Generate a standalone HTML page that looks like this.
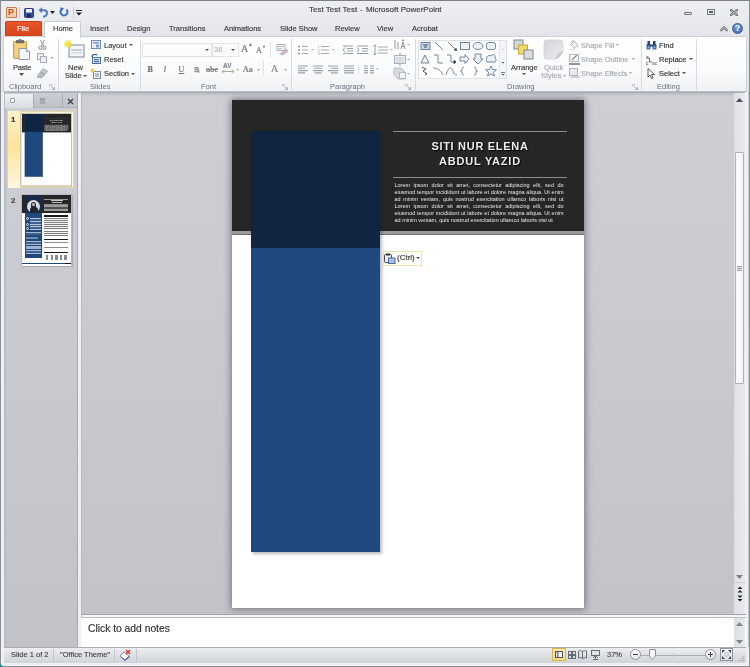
<!DOCTYPE html>
<html><head><meta charset="utf-8">
<style>
*{margin:0;padding:0;box-sizing:border-box}
html,body{width:750px;height:667px;overflow:hidden;background:#e3e6ea;font-family:"Liberation Sans",sans-serif;color:#333}
.a{position:absolute}
.t{position:absolute;white-space:nowrap;font-size:7.5px;line-height:9px;color:#3b3b3b;-webkit-text-stroke:0.15px currentColor}
.g{position:absolute;white-space:nowrap;font-size:7.5px;line-height:9px;color:#6a7380}
.sep{position:absolute;width:1px;background:#d6dbe1}
</style></head><body><div id="root" style="position:absolute;left:0;top:0;width:750px;height:667px;overflow:hidden;will-change:transform">
<!-- window frame -->
<div class="a" style="left:0;top:0;width:750px;height:667px;background:linear-gradient(#eceef0,#e9ebee 18px,#e2e4e7 36px,#e2e4e7);"></div>
<div class="a" style="left:0;top:0;width:750px;height:1px;background:#7a7f86"></div>
<div class="a" style="left:0;top:0;width:1px;height:667px;background:#8a8d94"></div>
<div class="a" style="left:749px;top:0;width:1px;height:667px;background:#8a8d94"></div>

<!-- title -->
<div class="t" style="left:309px;top:5px;font-size:8px;color:#3c3c3c">Test Test Test</div><div class="t" style="left:360px;top:5px;font-size:8px;color:#3c3c3c">-</div><div class="t" style="left:366px;top:5px;font-size:8px;color:#3c3c3c">Microsoft PowerPoint</div>


<!-- QAT -->
<div class="a" style="left:6px;top:7px;width:11px;height:11px;background:linear-gradient(#fbe3cf,#f6c9a6);border:1px solid #c9794a;border-radius:1px"></div>
<div class="t" style="left:8px;top:7px;font-size:9px;line-height:11px;font-weight:bold;color:#d0531b">P</div>
<div class="a" style="left:19px;top:7px;width:1px;height:11px;background:#c7ccd3"></div>
<svg class="a" style="left:24px;top:8px" width="10" height="10" viewBox="0 0 10 10"><rect x="0.5" y="0.5" width="9" height="9" rx="1" fill="#3a4fa0" stroke="#2b3a7c"/><rect x="2" y="1" width="6" height="3.5" fill="#e8ecf5"/><rect x="3" y="6" width="4" height="3" fill="#1d2a5c"/></svg>
<svg class="a" style="left:38px;top:7px" width="10" height="11" viewBox="0 0 10 11"><path d="M3 3.2 H6 C8.2 3.2,9 4.6,9 6 C9 8,7.5 9.5,5 9.8" fill="none" stroke="#4a78c4" stroke-width="1.9"/><path d="M0.5 3.2 L4 0.2 V6.2z" fill="#4a78c4"/></svg>
<svg class="a" style="left:50px;top:11px" width="5" height="3" viewBox="0 0 5 3"><path d="M0 0 H5 L2.5 3z" fill="#222"/></svg>
<svg class="a" style="left:59px;top:7px" width="10" height="10" viewBox="0 0 10 10"><path d="M7.5 2.5 A3.5 3.5 0 1 1 3 2" fill="none" stroke="#3d6fc2" stroke-width="2"/><path d="M1 0.5 L5 1 L2.5 4.5z" fill="#3d6fc2"/></svg>
<div class="a" style="left:73px;top:7px;width:1px;height:11px;background:#c7ccd3"></div>
<svg class="a" style="left:76px;top:10px" width="6" height="6" viewBox="0 0 6 6"><rect x="0" y="0" width="6" height="1" fill="#222"/><path d="M0 2.5 H6 L3 5.5z" fill="#222"/></svg>

<!-- window controls -->
<div class="a" style="left:684px;top:11.5px;width:8px;height:3.5px;border:1px solid #6f7580;border-radius:1px;background:#f3f4f6"></div>
<div class="a" style="left:707px;top:9px;width:7.5px;height:6px;border:1px solid #6f7580;background:#f3f4f6"></div>
<div class="a" style="left:709px;top:11px;width:3.5px;height:2px;background:#4f5560"></div>
<svg class="a" style="left:729.5px;top:8.5px" width="8" height="7" viewBox="0 0 8 7"><path d="M1 1 L7 6 M7 1 L1 6" stroke="#6a707a" stroke-width="2.4" stroke-linecap="square"/><path d="M1 1 L7 6 M7 1 L1 6" stroke="#e6e8eb" stroke-width="0.7"/></svg>
<svg class="a" style="left:720px;top:25px" width="8" height="7" viewBox="0 0 8 7"><path d="M1.2 5.2 L4 2.4 L6.8 5.2" fill="none" stroke="#6b7079" stroke-width="2.3" stroke-linejoin="round" stroke-linecap="round"/><path d="M1.2 5.2 L4 2.4 L6.8 5.2" fill="none" stroke="#e9ecef" stroke-width="0.8" stroke-linejoin="round" stroke-linecap="round"/></svg>
<div class="a" style="left:732px;top:22.5px;width:11px;height:11px;border-radius:50%;background:radial-gradient(circle at 40% 35%,#6f9bd6,#3b66a8);border:1px solid #3a5f98"></div>
<div class="t" style="left:735px;top:23px;font-size:9px;line-height:11px;font-weight:bold;color:#eef3fa">?</div>

<!-- tabs -->
<div class="a" style="left:5px;top:21px;width:37px;height:15px;background:linear-gradient(#e8562a,#d8431b);border:1px solid #c0401f;border-bottom:none;border-radius:2px 2px 0 0"></div>
<div class="t" style="left:17px;top:24px;color:#fff">File</div>
<div class="a" style="left:44px;top:21px;width:37px;height:17px;background:linear-gradient(#ffffff,#fbfcfd);border:1px solid #c9ced5;border-bottom:none;border-radius:2px 2px 0 0;z-index:3"></div>
<div class="t" style="left:53px;top:24px;z-index:4">Home</div>
<div class="t" style="left:90px;top:24px">Insert</div>
<div class="t" style="left:127px;top:24px">Design</div>
<div class="t" style="left:169px;top:24px">Transitions</div>
<div class="t" style="left:224px;top:24px">Animations</div>
<div class="t" style="left:280px;top:24px">Slide Show</div>
<div class="t" style="left:335px;top:24px">Review</div>
<div class="t" style="left:377px;top:24px">View</div>
<div class="t" style="left:412px;top:24px">Acrobat</div>

<!-- ribbon body -->
<div class="a" style="left:3px;top:36px;width:744px;height:56px;background:linear-gradient(#ffffff,#fafbfc 60%,#eff1f4);border:1px solid #cdd2d8;border-bottom-color:#b9bfc7;z-index:2"></div>


<div id="ribbon" class="a" style="left:0;top:0;width:750px;height:92px;z-index:5">
<!-- separators -->
<div class="sep" style="left:58px;top:39px;height:51px"></div>
<div class="sep" style="left:140px;top:39px;height:51px"></div>
<div class="sep" style="left:291px;top:39px;height:51px"></div>
<div class="sep" style="left:415px;top:39px;height:51px"></div>
<div class="sep" style="left:641px;top:39px;height:51px"></div>
<div class="sep" style="left:696px;top:39px;height:51px"></div>

<!-- group labels -->
<div class="g" style="left:9px;top:82px">Clipboard</div>
<div class="g" style="left:90px;top:82px">Slides</div>
<div class="g" style="left:201px;top:82px">Font</div>
<div class="g" style="left:330px;top:82px">Paragraph</div>
<div class="g" style="left:507px;top:82px">Drawing</div>
<div class="g" style="left:657px;top:82px">Editing</div>
<!-- launchers -->
<svg class="a" style="left:49px;top:84px" width="6" height="6" viewBox="0 0 6 6"><path d="M0.5 0.5 H3 M0.5 0.5 V3" stroke="#c3c9d0" stroke-width="1" fill="none"/><path d="M2 2 L5.5 5.5 M5.5 3 V5.5 H3" stroke="#aab2bb" stroke-width="1" fill="none"/></svg>
<svg class="a" style="left:282px;top:84px" width="6" height="6" viewBox="0 0 6 6"><path d="M0.5 0.5 H3 M0.5 0.5 V3" stroke="#c3c9d0" stroke-width="1" fill="none"/><path d="M2 2 L5.5 5.5 M5.5 3 V5.5 H3" stroke="#aab2bb" stroke-width="1" fill="none"/></svg>
<svg class="a" style="left:405px;top:84px" width="6" height="6" viewBox="0 0 6 6"><path d="M0.5 0.5 H3 M0.5 0.5 V3" stroke="#c3c9d0" stroke-width="1" fill="none"/><path d="M2 2 L5.5 5.5 M5.5 3 V5.5 H3" stroke="#aab2bb" stroke-width="1" fill="none"/></svg>
<svg class="a" style="left:632px;top:84px" width="6" height="6" viewBox="0 0 6 6"><path d="M0.5 0.5 H3 M0.5 0.5 V3" stroke="#c3c9d0" stroke-width="1" fill="none"/><path d="M2 2 L5.5 5.5 M5.5 3 V5.5 H3" stroke="#aab2bb" stroke-width="1" fill="none"/></svg>

<!-- Clipboard -->
<svg class="a" style="left:13px;top:39px" width="18" height="22" viewBox="0 0 18 22"><rect x="0.5" y="2.5" width="13" height="17" rx="0.8" fill="#ecc462" stroke="#c9a04c"/><rect x="1.8" y="4" width="10.5" height="14" fill="#f2d27e"/><rect x="3" y="1" width="8" height="3.2" rx="0.6" fill="#6d6a66"/><rect x="5.5" y="0" width="3" height="1.6" fill="#8d8a86"/><path d="M6 9.5 H13.5 L16.5 12.5 V20.5 H6z" fill="#f5f6fb" stroke="#8e8aa6" stroke-width="0.9"/><path d="M13.5 9.5 V12.5 H16.5" fill="#dcdbe8" stroke="#8e8aa6" stroke-width="0.7"/></svg>
<div class="t" style="left:13px;top:62.5px;letter-spacing:-0.2px">Paste</div>
<svg class="a" style="left:19px;top:73px" width="5" height="3" viewBox="0 0 5 3"><path d="M0 0 H5 L2.5 3z" fill="#555"/></svg>
<svg class="a" style="left:38px;top:40px" width="9" height="10" viewBox="0 0 9 10"><path d="M2.5 0 L5.5 6 M6.5 0 L3.5 6" stroke="#9aa0a8" stroke-width="1.1"/><circle cx="2.5" cy="7.8" r="1.6" fill="none" stroke="#9aa0a8" stroke-width="1.1"/><circle cx="6.5" cy="7.8" r="1.6" fill="none" stroke="#9aa0a8" stroke-width="1.1"/></svg>
<svg class="a" style="left:37px;top:53px" width="11" height="10" viewBox="0 0 11 10"><rect x="0.5" y="0.5" width="6" height="6" fill="#eceef1" stroke="#a7adb5"/><rect x="3.5" y="3.5" width="6" height="6" fill="#eceef1" stroke="#a7adb5"/></svg>
<svg class="a" style="left:50px;top:57px" width="4" height="2" viewBox="0 0 4 2"><path d="M0 0 H4 L2 2z" fill="#a7adb5"/></svg>
<svg class="a" style="left:37px;top:68px" width="11" height="10" viewBox="0 0 11 10"><path d="M6 0.5 L10.5 3 L8 6.5 L3.5 4z" fill="#c4c8ce" stroke="#a3a9b1" stroke-width="0.8"/><path d="M3.5 4 L8 6.5 L5 9.5 L0.5 9.5 L1 7z" fill="#b5bac1" stroke="#9ca2aa" stroke-width="0.8"/></svg>

<!-- Slides -->
<svg class="a" style="left:64px;top:40px" width="22" height="19" viewBox="0 0 22 19"><rect x="5" y="5" width="15" height="12" fill="#f3f5f8" stroke="#7f8a98"/><rect x="7" y="9" width="11" height="2" fill="#c5cdd8"/><rect x="7" y="12" width="11" height="1.5" fill="#d5dbe3"/><path d="M4 0 V8 M0 4 H8 M1 1 L7 7 M7 1 L1 7" stroke="#f2e23a" stroke-width="1.3"/></svg>
<div class="t" style="left:68px;top:63px">New</div>
<div class="t" style="left:65px;top:71px">Slide</div>
<svg class="a" style="left:83px;top:75px" width="4" height="2" viewBox="0 0 4 2"><path d="M0 0 H4 L2 2z" fill="#555"/></svg>
<svg class="a" style="left:91px;top:40px" width="10" height="9" viewBox="0 0 10 9"><rect x="0.5" y="0.5" width="9" height="8" fill="#e6edf6" stroke="#6f8db5"/><rect x="2" y="2" width="6" height="1.5" fill="#7f9cc2"/><rect x="5" y="4.5" width="3" height="3" fill="#7f9cc2"/></svg>
<div class="t" style="left:104px;top:40.5px">Layout</div>
<svg class="a" style="left:129px;top:44px" width="4" height="2" viewBox="0 0 4 2"><path d="M0 0 H4 L2 2z" fill="#555"/></svg>
<svg class="a" style="left:91px;top:54px" width="10" height="10" viewBox="0 0 10 10"><rect x="1.5" y="3.5" width="8" height="6" fill="#dfe7f2" stroke="#4d6f9f"/><path d="M1 3 A3 3 0 0 1 6 1" fill="none" stroke="#2f5fa8" stroke-width="1.4"/><rect x="3" y="5" width="5" height="1.2" fill="#4d6f9f"/><rect x="3" y="7" width="5" height="1.2" fill="#4d6f9f"/></svg>
<div class="t" style="left:104px;top:55px">Reset</div>
<svg class="a" style="left:90px;top:68px" width="11" height="11" viewBox="0 0 11 11"><rect x="3.5" y="3.5" width="7" height="7" fill="#f0f3f7" stroke="#7f8a98"/><rect x="5" y="5.5" width="4" height="1" fill="#7f8a98"/><rect x="5" y="7.5" width="4" height="1" fill="#7f8a98"/><circle cx="2.5" cy="2.5" r="2" fill="#f0d04a"/></svg>
<div class="t" style="left:104px;top:69px">Section</div>
<svg class="a" style="left:131px;top:73px" width="4" height="2" viewBox="0 0 4 2"><path d="M0 0 H4 L2 2z" fill="#555"/></svg>

<!-- Font -->
<div class="a" style="left:142px;top:43px;width:70px;height:14px;background:#fbfbfc;border:1px solid #e1e4e8"></div>
<div class="a" style="left:212px;top:43px;width:27px;height:14px;background:#fbfbfc;border:1px solid #e1e4e8"></div>
<svg class="a" style="left:205px;top:49px" width="4" height="2" viewBox="0 0 4 2"><path d="M0 0 H4 L2 2z" fill="#555"/></svg>
<div class="t" style="left:214px;top:45px;color:#b5b9be">36</div>
<svg class="a" style="left:231px;top:49px" width="4" height="2" viewBox="0 0 4 2"><path d="M0 0 H4 L2 2z" fill="#555"/></svg>
<div class="t" style="left:241px;top:43px;font-size:10px;line-height:12px;color:#777;font-family:'Liberation Serif',serif">A</div>
<div class="t" style="left:248px;top:42px;font-size:5px;line-height:5px;color:#777">&#9650;</div>
<div class="t" style="left:256px;top:46px;font-size:8px;line-height:10px;color:#777;font-family:'Liberation Serif',serif">A</div>
<div class="t" style="left:262px;top:44px;font-size:4px;line-height:5px;color:#777">&#9660;</div>
<div class="sep" style="left:270px;top:42px;height:15px;background:#dde1e6"></div>
<svg class="a" style="left:275px;top:44px" width="14" height="12" viewBox="0 0 14 12"><rect x="2" y="0.5" width="8" height="6" fill="#f2f4f7" stroke="#a9b0b9"/><path d="M3 2.5 H9 M3 4.5 H7" stroke="#c0c6ce"/><path d="M5 10 L11 5 L13 7 L8 11z" fill="#d7b4c7" stroke="#a7a0a8" stroke-width="0.6"/></svg>
<div class="t" style="left:147.5px;top:64.5px;font-size:8px;line-height:10px;font-weight:bold;color:#666;font-family:'Liberation Serif',serif">B</div>
<div class="t" style="left:163.5px;top:64.5px;font-size:8px;line-height:10px;font-style:italic;color:#777;font-family:'Liberation Serif',serif">I</div>
<div class="t" style="left:178.5px;top:64.5px;font-size:8px;line-height:10px;text-decoration:underline;color:#777;font-family:'Liberation Serif',serif">U</div>
<div class="t" style="left:194px;top:64.5px;font-size:8px;line-height:10px;font-weight:bold;color:#888;text-shadow:1px 1px 0 #ccc">S</div>
<div class="t" style="left:206px;top:64.5px;font-size:8px;line-height:10px;font-weight:bold;color:#888;text-decoration:line-through;font-family:'Liberation Serif',serif">abc</div>
<div class="t" style="left:223px;top:61.5px;font-size:6.5px;line-height:7px;font-weight:bold;color:#888">AV</div>
<svg class="a" style="left:222px;top:68.5px" width="12" height="5" viewBox="0 0 12 5"><path d="M0 2.5 H12 M0 2.5 L2 0.5 M0 2.5 L2 4.5 M12 2.5 L10 0.5 M12 2.5 L10 4.5" stroke="#8cb08c" stroke-width="0.9" fill="none"/></svg>
<svg class="a" style="left:236px;top:68.5px" width="3" height="2" viewBox="0 0 3 2"><path d="M0 0 H3 L1.5 2z" fill="#aaa"/></svg>
<div class="t" style="left:243px;top:64.5px;font-size:8px;line-height:10px;font-weight:bold;color:#888;font-family:'Liberation Serif',serif">Aa</div>
<svg class="a" style="left:257px;top:68.5px" width="3" height="2" viewBox="0 0 3 2"><path d="M0 0 H3 L1.5 2z" fill="#aaa"/></svg>
<div class="sep" style="left:263px;top:61px;height:14px;background:#dde1e6"></div>
<div class="t" style="left:271px;top:62.5px;font-size:10px;line-height:12px;color:#888;font-family:'Liberation Serif',serif">A</div>
<svg class="a" style="left:284px;top:68.5px" width="3" height="2" viewBox="0 0 3 2"><path d="M0 0 H3 L1.5 2z" fill="#aaa"/></svg>

<!-- Paragraph -->
<svg class="a" style="left:297px;top:45px" width="100" height="10" viewBox="0 0 100 10">
 <g fill="#8f959d"><circle cx="2" cy="1.5" r="1"/><circle cx="2" cy="5" r="1"/><circle cx="2" cy="8.5" r="1"/></g>
 <g stroke="#a3a9b1" stroke-width="1"><path d="M5 1.5 H11 M5 5 H11 M5 8.5 H11"/></g>
 <path d="M14 4 H17 L15.5 5.5z" fill="#a3a9b1"/>
 <g fill="#8f959d" font-size="3" font-family="Liberation Sans"><text x="21" y="3">1</text><text x="21" y="6.5">2</text><text x="21" y="10">3</text></g>
 <g stroke="#a3a9b1" stroke-width="1"><path d="M24 1.5 H32 M24 5 H32 M24 8.5 H32"/></g>
 <path d="M35 4 H38 L36.5 5.5z" fill="#a3a9b1"/>
 <g stroke="#9aa0a8" stroke-width="1"><path d="M46 1 H56 M50 3.5 H56 M50 6 H56 M46 8.5 H56"/></g>
 <path d="M48 2.5 L46 4.75 L48 7" fill="none" stroke="#8f959d" stroke-width="1"/>
 <g stroke="#9aa0a8" stroke-width="1"><path d="M60 1 H71 M65 3.5 H71 M65 6 H71 M60 8.5 H71"/></g>
 <path d="M60 2.5 L62 4.75 L60 7" fill="none" stroke="#8f959d" stroke-width="1"/>
 <g stroke="#a3a9b1" stroke-width="1"><path d="M81 2 H91 M81 5 H91 M81 8 H91"/></g>
 <path d="M78 0 V10 M76.5 1.5 L78 0 L79.5 1.5 M76.5 8.5 L78 10 L79.5 8.5" fill="none" stroke="#8f959d" stroke-width="0.9"/>
 <path d="M93 4 H96 L94.5 5.5z" fill="#a3a9b1"/>
</svg>
<svg class="a" style="left:297px;top:64.5px" width="84" height="9" viewBox="0 0 84 9">
 <g stroke="#9ca2aa" stroke-width="1.1">
 <path d="M1 1 H11 M1 3.3 H8 M1 5.6 H11 M1 7.9 H8"/>
 <path d="M16 1 H26 M17.5 3.3 H24.5 M16 5.6 H26 M17.5 7.9 H24.5"/>
 <path d="M31 1 H41 M34 3.3 H41 M31 5.6 H41 M34 7.9 H41"/>
 <path d="M47 1 H57 M47 3.3 H57 M47 5.6 H57 M47 7.9 H57"/>
 </g>
 <path d="M61.5 0 V9" stroke="#dde1e6"/>
 <g stroke="#9ca2aa" stroke-width="1.1"><path d="M67 1 H71 M67 3.3 H71 M67 5.6 H71 M67 7.9 H71 M73 1 H77 M73 3.3 H77 M73 5.6 H77 M73 7.9 H77"/></g>
 <path d="M79 3.5 H82 L80.5 5z" fill="#a3a9b1"/>
</svg>
<svg class="a" style="left:393px;top:39px" width="18" height="41" viewBox="0 0 18 41">
 <g stroke="#8f959d" stroke-width="1"><path d="M2 1 V10 M5 3 V10"/></g>
 <path d="M8 10 L10 3 L12 10 M9 7.5 H11" fill="none" stroke="#8f959d" stroke-width="1"/>
 <path d="M10 0 L8.5 2 H11.5z" fill="#8f959d"/>
 <path d="M14 5 H17 L15.5 6.5z" fill="#a3a9b1"/>
 <rect x="1.5" y="16.5" width="11" height="8" fill="#eef1f4" stroke="#a9b0b9"/>
 <path d="M3 19 H11 M3 21 H11 M3 23 H11" stroke="#c3c9d0"/>
 <path d="M7 14 V16 M7 25 V27" stroke="#8f959d"/>
 <path d="M14 20 H17 L15.5 21.5z" fill="#a3a9b1"/>
 <path d="M1 29 H8 L12 33 V40 H5 L1 36z" fill="#d6dbe1" stroke="#a9b0b9" stroke-width="0.8"/>
 <rect x="6.5" y="33.5" width="6" height="6" fill="#f4f6f8" stroke="#a9b0b9" stroke-width="0.8"/>
 <path d="M14 34 H17 L15.5 35.5z" fill="#a3a9b1"/>
</svg>

<!-- Drawing: shapes gallery -->
<div class="a" style="left:418px;top:40px;width:89px;height:39px;background:#fff;border:1px solid #dce1e7"></div>
<div class="a" style="left:499px;top:41px;width:7px;height:37px;background:#f3f5f8;border-left:1px solid #e3e7ec"></div>
<svg class="a" style="left:419px;top:41px" width="80" height="37" viewBox="0 0 80 37" fill="none" stroke="#66798f" stroke-width="0.9">
 <rect x="2" y="1.5" width="9" height="7" fill="#c9d6e6" stroke="#5f7a9c"/><path d="M4 4 H9 M5 6 H8" stroke="#2c3e55"/>
 <path d="M16 1 L24 9"/>
 <path d="M29 1 L37 9" /><path d="M35.5 9 L37.5 9.5 L37 7.5z" fill="#333" stroke="#333"/>
 <rect x="41.5" y="1.5" width="9" height="7" fill="#eaf1f8"/>
 <ellipse cx="59" cy="5" rx="5" ry="3.5" fill="#eaf1f8"/>
 <rect x="67.5" y="1.5" width="9" height="7" rx="2" fill="#eaf1f8"/>
 <path d="M2 22 L6 14 L10 22z" fill="#eaf1f8"/>
 <path d="M15 14 H19 V22 H24"/>
 <path d="M28 14 H32 V21 H36"/><path d="M35 19.5 L37 21 L35 22.5z" fill="#333" stroke="#333"/>
 <path d="M41 16 H46 V13.5 L50 18 L46 22.5 V20 H41z" fill="#eaf1f8"/>
 <path d="M56 13 H62 V18 H64 L59 23 L54 18 H56z" fill="#eaf1f8"/>
 <path d="M68 21 C66 17,69 13,72 15 C74 12,77 14,76 17 C78 18,77 22,74 21z" fill="#eaf1f8"/>
 <path d="M3 26 L7 28 L4 30 L8 33 M6.5 31.5 L8 33 L6 34" stroke="#444"/>
 <path d="M14 27 C18 27,22 29,24 34"/>
 <path d="M27 34 C30 25,32 25,34 30 C35 33,36 34,38 34"/>
 <path d="M45 26 C43 26,43 27,43 29 C43 30,42 30,41.5 30 C42 30,43 30,43 31 C43 33,43 34,45 34"/>
 <path d="M55 26 C57 26,57 27,57 29 C57 30,58 30,58.5 30 C58 30,57 30,57 31 C57 33,57 34,55 34"/>
 <path d="M72 25 L73.6 28.5 L77.5 28.8 L74.5 31.3 L75.5 35 L72 33 L68.5 35 L69.5 31.3 L66.5 28.8 L70.4 28.5z" fill="#eaf1f8"/>
</svg>
<svg class="a" style="left:500px;top:42px" width="6" height="36" viewBox="0 0 6 36"><path d="M1.5 8 H4.5 L3 6.5z" fill="#c7ccd2"/><path d="M1.5 20 H4.5 L3 21.5z" fill="#444"/><path d="M1 30.5 H5" stroke="#444" stroke-width="0.7"/><path d="M1.5 32 H4.5 L3 33.5z" fill="#444"/></svg>
<!-- Arrange -->
<svg class="a" style="left:513px;top:39px" width="22" height="21" viewBox="0 0 22 21"><rect x="1" y="1" width="9" height="9" fill="#d3d7dc" stroke="#808893"/><rect x="5.5" y="6" width="9" height="9" fill="#f2dc68" stroke="#c6a93a"/><rect x="11" y="11" width="9" height="9" fill="#d8dce1" stroke="#808893"/></svg>
<div class="t" style="left:511px;top:63px">Arrange</div>
<svg class="a" style="left:522px;top:73px" width="4" height="2" viewBox="0 0 4 2"><path d="M0 0 H4 L2 2z" fill="#555"/></svg>
<!-- Quick styles -->
<svg class="a" style="left:543px;top:39px" width="22" height="22" viewBox="0 0 22 22"><defs><linearGradient id="qs" x1="0" y1="0" x2="1" y2="1"><stop offset="0" stop-color="#d3d5d8"/><stop offset="1" stop-color="#ebecee"/></linearGradient></defs><path d="M4 1 H17 Q20 1,20 4 V13 L13 20 H4 Q1 20,1 17 V4 Q1 1,4 1z" fill="url(#qs)" stroke="#d0d3d7" stroke-width="0.8"/><path d="M20 13 Q15 12,13 20 Q16 19,20 13z" fill="#c5c8cc" stroke="#bfc3c8" stroke-width="0.6"/></svg>
<div class="t" style="left:544px;top:62.5px;color:#a6abb2">Quick</div>
<div class="t" style="left:541px;top:71px;color:#a6abb2">Styles</div>
<svg class="a" style="left:563px;top:75px" width="3" height="2" viewBox="0 0 3 2"><path d="M0 0 H3 L1.5 2z" fill="#aaa"/></svg>
<!-- Shape fill/outline/effects -->
<svg class="a" style="left:569px;top:40px" width="11" height="10" viewBox="0 0 11 10"><path d="M1.5 4.5 L5 1 L9 5 L5.5 8.5z" fill="#eceef0" stroke="#aeb3ba" stroke-width="0.9"/><path d="M3 3 Q2 0.5,4 0.5 Q5.5 0.5,5.5 2.5" fill="none" stroke="#aeb3ba" stroke-width="0.8"/><path d="M9.5 5.5 Q10.5 7.5,9.7 8.3 Q8.9 7.5,9.5 5.5z" fill="#b9bec4"/><path d="M0.5 9.5 H6" stroke="#d9dce0" stroke-width="1"/></svg>
<div class="t" style="left:581px;top:40.5px;color:#a6abb2">Shape Fill</div>
<svg class="a" style="left:616px;top:44px" width="3" height="2" viewBox="0 0 3 2"><path d="M0 0 H3 L1.5 2z" fill="#aaa"/></svg>
<svg class="a" style="left:569px;top:54px" width="11" height="11" viewBox="0 0 11 11"><rect x="0.5" y="0.5" width="9" height="7" fill="#f4f5f7" stroke="#b1b6bd"/><path d="M3 6 L8 1" stroke="#8d939b" stroke-width="1.2"/><rect x="0" y="9" width="11" height="2" fill="#8d939b"/></svg>
<div class="t" style="left:581px;top:55px;color:#a6abb2">Shape Outline</div>
<svg class="a" style="left:632px;top:58px" width="3" height="2" viewBox="0 0 3 2"><path d="M0 0 H3 L1.5 2z" fill="#aaa"/></svg>
<svg class="a" style="left:569px;top:68px" width="11" height="10" viewBox="0 0 11 10"><rect x="0.5" y="0.5" width="8" height="7" fill="#e8eaed" stroke="#b1b6bd"/><rect x="2" y="8" width="9" height="2" fill="#cdd1d6"/></svg>
<div class="t" style="left:581px;top:69px;color:#a6abb2">Shape Effects</div>
<svg class="a" style="left:629px;top:72px" width="3" height="2" viewBox="0 0 3 2"><path d="M0 0 H3 L1.5 2z" fill="#aaa"/></svg>

<!-- Editing -->
<svg class="a" style="left:646px;top:40px" width="11" height="10" viewBox="0 0 11 10"><rect x="0.5" y="4" width="4" height="5.5" rx="1" fill="#3c5f9c"/><rect x="6.5" y="4" width="4" height="5.5" rx="1" fill="#3c5f9c"/><rect x="1.5" y="1" width="2.5" height="4" fill="#27437a"/><rect x="7" y="1" width="2.5" height="4" fill="#27437a"/><rect x="4" y="4.5" width="3" height="2" fill="#27437a"/><circle cx="2.5" cy="7.5" r="1" fill="#9fc1ef"/><circle cx="8.5" cy="7.5" r="1" fill="#9fc1ef"/></svg>
<div class="t" style="left:659px;top:40.5px;color:#333">Find</div>
<svg class="a" style="left:646px;top:54px" width="12" height="11" viewBox="0 0 12 11"><text x="0" y="5" font-size="5" font-family="Liberation Sans" fill="#333">a</text><text x="0" y="10.5" font-size="5" font-family="Liberation Sans" fill="#333">c</text><text x="6" y="10.5" font-size="5" font-family="Liberation Sans" fill="#3a7a3a">ac</text><path d="M3.5 4 V8 H6" stroke="#333" stroke-width="0.7" fill="none"/></svg>
<div class="t" style="left:659px;top:55px;color:#333">Replace</div>
<svg class="a" style="left:689px;top:58px" width="4" height="2" viewBox="0 0 4 2"><path d="M0 0 H4 L2 2z" fill="#555"/></svg>
<svg class="a" style="left:647px;top:68px" width="9" height="11" viewBox="0 0 9 11"><path d="M1 0.5 V9 L3 7 L4.5 10.5 L6 10 L4.7 6.5 H7.5z" fill="#fff" stroke="#333" stroke-width="0.8"/></svg>
<div class="t" style="left:659px;top:69px;color:#333">Select</div>
<svg class="a" style="left:682px;top:72px" width="4" height="2" viewBox="0 0 4 2"><path d="M0 0 H4 L2 2z" fill="#555"/></svg>
</div>


<!-- below ribbon: main area -->
<div class="a" style="left:1px;top:92px;width:748px;height:555px;background:linear-gradient(#cecfd4,#c9cacf 45%,#c2c3c8)"></div>
<div class="a" style="left:1px;top:92px;width:748px;height:1px;background:#a7adb6"></div>
<div class="a" style="left:82px;top:93px;width:652px;height:2px;background:#bec2c8"></div>

<!-- left window edge -->
<div class="a" style="left:1px;top:92px;width:3px;height:555px;background:#eef0f5"></div>
<div class="a" style="left:4px;top:92px;width:2px;height:555px;background:#b9bcc2"></div>
<!-- right window edge -->
<div class="a" style="left:745px;top:92px;width:3px;height:555px;background:#eef0f5"></div>

<!-- splitter between panel and canvas -->
<div class="a" style="left:77px;top:93px;width:1px;height:554px;background:#a8abb0"></div>
<div class="a" style="left:78px;top:93px;width:3px;height:554px;background:#eef0f6"></div>
<div class="a" style="left:81px;top:93px;width:1px;height:554px;background:#b5b8be"></div>


<!-- left panel tabs -->
<div class="a" style="left:5px;top:94px;width:72px;height:14px;background:linear-gradient(#c9ccd2,#bfc3c9);border-bottom:1px solid #aeb3ba"></div>
<div class="a" style="left:5px;top:94px;width:29px;height:14px;background:linear-gradient(#eef0f3,#d9dde2);border-right:1px solid #a9aeb5"></div>
<div class="a" style="left:62px;top:94px;width:1px;height:14px;background:#a9aeb5"></div>
<div class="a" style="left:10px;top:98px;width:5px;height:5px;background:#fff;border:1px solid #9aa0a8;border-radius:1px"></div>
<svg class="a" style="left:39px;top:98px" width="7" height="6" viewBox="0 0 7 6"><rect x="1" y="0" width="5" height="3.5" fill="#9ea4ac"/><path d="M0 4.5 H7 M1 5.5 H6" stroke="#9ea4ac" stroke-width="0.8"/></svg>
<svg class="a" style="left:67px;top:98px" width="7" height="7" viewBox="0 0 7 7"><path d="M1 1 L6 6 M6 1 L1 6" stroke="#3f444b" stroke-width="1.4"/></svg>

<!-- thumb 1 -->
<div class="a" style="left:8px;top:111px;width:66px;height:77px;background:linear-gradient(90deg,#fde5a0 0px,#fde8a8 10px,#fcf3d6 30px,#fdf6df 60px);border:1px solid #e4d8a8;border-radius:1px"></div>
<div class="a" style="left:8px;top:111px;width:12px;height:77px;background:linear-gradient(#fef3cc,#fde39a 45%,#fdf0c4 80%,#fdf7e2)"></div>
<div class="t" style="left:11px;top:115px;font-size:8px;line-height:10px;font-weight:bold;color:#333">1</div>
<div class="a" style="left:20px;top:112.5px;width:52px;height:74px;background:#e8e2cc;border:1px solid #c9c4b0"></div>
<div class="a" style="left:22px;top:114px;width:352px;height:508px;background:#fff;overflow:hidden;transform:scale(0.1392);transform-origin:0 0">
<div class="a" style="left:0;top:0;width:352px;height:131px;background:#262626"></div>
<div class="a" style="left:0;top:131px;width:352px;height:4px;background:#9b9b9b;border-bottom:1px solid #707070"></div>
<div class="a" style="left:19px;top:0px;width:129px;height:451px;background:#1f497d;box-shadow:2px 2px 3px rgba(0,0,0,.45)"></div>
<div class="a" style="left:19px;top:0px;width:129px;height:128px;background:#0f2541"></div>
<div class="a" style="left:160.5px;top:30.5px;width:174.5px;height:1.5px;background:#8c8c8c"></div>
<div class="a" style="left:160.5px;top:76.5px;width:174.5px;height:1.5px;background:#8c8c8c"></div>
<div class="a" style="left:160px;top:40.7px;width:176px;text-align:center;font-size:11px;line-height:11px;font-weight:bold;letter-spacing:0.7px;color:#ececec;text-shadow:1px 1px 1px #000;white-space:nowrap">SITI NUR ELENA</div>
<div class="a" style="left:160px;top:56.1px;width:176px;text-align:center;font-size:11px;line-height:11px;font-weight:bold;letter-spacing:0.8px;color:#ececec;text-shadow:1px 1px 1px #000;white-space:nowrap">ABDUL YAZID</div>
<div class="a" style="left:162.5px;top:82.2px;width:169px;font-size:5.5px;line-height:7px;color:#e6e6e6;text-align:justify;text-align-last:left">Lorem ipsum dolor sit amet, consectetur adipiscing elit, sed do eiusmod tempor incididunt ut labore et dolore magna aliqua. Ut enim ad minim veniam, quis nostrud exercitation ullamco laboris nisi ut Lorem ipsum dolor sit amet, consectetur adipiscing elit, sed do eiusmod tempor incididunt ut labore et dolore magna aliqua. Ut enim ad minim veniam, quis nostrud exercitation ullamco laboris nisi ut</div>
</div>

<!-- thumb 2 -->
<div class="t" style="left:11px;top:196px;font-size:8px;line-height:10px;font-weight:bold;color:#4a4a4a">2</div>
<div class="a" style="left:21px;top:194px;width:51px;height:72px;background:#e4e6ea;border:1px solid #b5b9bf;box-shadow:1px 1px 1px rgba(0,0,0,.15)"></div>
<div class="a" style="left:22px;top:195px;width:49px;height:70.5px;background:#fff;overflow:hidden;filter:blur(0.25px)">
 <div class="a" style="left:0;top:0;width:49px;height:18px;background:#262626"></div>
 <div class="a" style="left:2.6px;top:0;width:17.5px;height:62.7px;background:#1f497d"></div>
 <div class="a" style="left:2.6px;top:0;width:17.5px;height:18px;background:#172a46"></div>
 <div class="a" style="left:5px;top:5.2px;width:13.2px;height:13.2px;border-radius:50%;background:#d8dde5"></div>
 <div class="a" style="left:8.8px;top:7px;width:5.5px;height:6px;border-radius:3px 3px 1px 1px;background:#2a2f38"></div>
 <div class="a" style="left:8px;top:11.5px;width:7.5px;height:6.5px;border-radius:3px 3px 0 0;background:#20252e"></div>
 <div class="a" style="left:10.3px;top:8.3px;width:2.6px;height:3.2px;border-radius:50%;background:#c9b7a8"></div>
 <div class="a" style="left:22px;top:3.8px;width:24px;height:0.8px;background:#9a9a9a"></div>
 <div class="a" style="left:29px;top:4.8px;width:12px;height:1.3px;background:#cfcfcf"></div>
 <div class="a" style="left:30px;top:7.2px;width:10px;height:1.1px;background:#bdbdbd"></div>
 <div class="a" style="left:22px;top:9px;width:24px;height:0.6px;background:#8a8a8a"></div>
 <div class="a" style="left:22px;top:10.2px;width:24px;height:6px;background:repeating-linear-gradient(#9a9a9a 0 0.9px,#505050 0.9px 1.3px)"></div>
 <div class="a" style="left:3.8px;top:22px;width:3.4px;height:3.4px;border-radius:50%;border:0.9px solid #e3e9f2"></div>
 <div class="a" style="left:3.8px;top:27.5px;width:3.4px;height:3.4px;border-radius:50%;border:0.9px solid #e3e9f2"></div>
 <div class="a" style="left:3.8px;top:31.7px;width:3.4px;height:3.4px;border-radius:50%;border:0.9px solid #e3e9f2"></div>
 <div class="a" style="left:8px;top:22.5px;width:10.5px;height:12px;background:repeating-linear-gradient(#b7c6db 0 0.7px,#3d628f 0.7px 1.6px)"></div>
 <div class="a" style="left:3.5px;top:37px;width:15px;height:3px;background:repeating-linear-gradient(#a8bad2 0 0.7px,#3d628f 0.7px 1.6px)"></div>
 <div class="a" style="left:3.5px;top:42px;width:12px;height:2px;background:#6f8db3"></div>
 <div class="a" style="left:3.5px;top:46px;width:15px;height:4px;background:repeating-linear-gradient(#a8bad2 0 0.7px,#3d628f 0.7px 1.6px)"></div>
 <div class="a" style="left:3.5px;top:51px;width:15px;height:3px;background:#9fb3cf"></div>
 <div class="a" style="left:3.5px;top:55px;width:15px;height:4px;background:repeating-linear-gradient(#a8bad2 0 0.7px,#3d628f 0.7px 1.6px)"></div>
 <div class="a" style="left:22.4px;top:20px;width:23.4px;height:1.6px;background:#1a1a1a"></div>
 <div class="a" style="left:22.4px;top:23px;width:23.4px;height:11.5px;background:repeating-linear-gradient(#7d7d7d 0 0.8px,#f4f4f4 0.8px 2px)"></div>
 <div class="a" style="left:22.4px;top:35.8px;width:23.4px;height:5px;background:repeating-linear-gradient(#7d7d7d 0 0.8px,#f4f4f4 0.8px 2px)"></div>
 <div class="a" style="left:22.4px;top:43.6px;width:23.4px;height:1.6px;background:#1a1a1a"></div>
 <div class="a" style="left:22.4px;top:46.6px;width:23.4px;height:7px;background:repeating-linear-gradient(#8a8a8a 0 0.7px,#fff 0.7px 1.8px)"></div>
 <div class="a" style="left:22.4px;top:56.7px;width:23.4px;height:1.6px;background:#1a1a1a"></div>
 <div class="a" style="left:24px;top:59.5px;width:22px;height:5px;background:repeating-linear-gradient(90deg,#8a8a8a 0 2.4px,#fff 2.4px 4.6px)"></div>
 <div class="a" style="left:0;top:67.5px;width:43.4px;height:1.3px;background:#1f497d"></div>
 <div class="a" style="left:43.4px;top:67.5px;width:5.6px;height:1.3px;background:#1a1a1a"></div>
</div>

<!-- right scrollbar -->
<div class="a" style="left:734px;top:93px;width:11px;height:521px;background:linear-gradient(90deg,#dde1e7,#e6e9ee)"></div>
<svg class="a" style="left:736px;top:98px" width="7" height="4" viewBox="0 0 7 4"><path d="M0 4 L3.5 0 L7 4z" fill="#4a4f57"/></svg>
<div class="a" style="left:734.5px;top:152px;width:9px;height:232px;background:linear-gradient(90deg,#f5f6f8,#fbfcfd 50%,#eef0f3);border:1px solid #aeb3ba;border-radius:1px"></div>
<div class="a" style="left:737px;top:265.5px;width:5px;height:5px;background:repeating-linear-gradient(#9ea3aa 0 1px,#e3e6ea 1px 2px)"></div>
<svg class="a" style="left:736px;top:575px" width="7" height="4" viewBox="0 0 7 4"><path d="M0 0 L3.5 4 L7 0z" fill="#7a7f87"/></svg>
<div class="a" style="left:734px;top:582px;width:11px;height:1px;background:#c9cdd3"></div>
<svg class="a" style="left:736.5px;top:585.5px" width="6" height="7" viewBox="0 0 6 7"><path d="M0.5 3 L3 0.5 L5.5 3z M0.5 6.5 L3 4 L5.5 6.5z" fill="#1e2126"/></svg>
<svg class="a" style="left:736.5px;top:595px" width="6" height="7" viewBox="0 0 6 7"><path d="M0.5 0.5 L3 3 L5.5 0.5z M0.5 4 L3 6.5 L5.5 4z" fill="#1e2126"/></svg>

<!-- slide -->
<div class="a" style="left:232px;top:100px;width:352px;height:508px;background:#fff;box-shadow:0 0 7px 1px rgba(30,34,40,.5);overflow:hidden">
<div class="a" style="left:0;top:0;width:352px;height:131px;background:#262626"></div>
<div class="a" style="left:0;top:131px;width:352px;height:4px;background:#9b9b9b;border-bottom:1px solid #707070"></div>
<div class="a" style="left:19px;top:31px;width:129px;height:421px;background:#1f4a7f;box-shadow:2px 2px 3px rgba(20,30,50,.3)"></div>
<div class="a" style="left:19px;top:31px;width:129px;height:117px;background:#0f2541"></div>
<div class="a" style="left:160.5px;top:30.5px;width:174.5px;height:1.5px;background:#8c8c8c"></div>
<div class="a" style="left:160.5px;top:76.5px;width:174.5px;height:1.5px;background:#8c8c8c"></div>
<div class="a" style="left:160px;top:40.7px;width:176px;text-align:center;font-size:11px;line-height:11px;font-weight:bold;letter-spacing:0.7px;color:#ececec;text-shadow:1px 1px 1px #000;white-space:nowrap">SITI NUR ELENA</div>
<div class="a" style="left:160px;top:56.1px;width:176px;text-align:center;font-size:11px;line-height:11px;font-weight:bold;letter-spacing:0.8px;color:#ececec;text-shadow:1px 1px 1px #000;white-space:nowrap">ABDUL YAZID</div>
<div class="a" style="left:162.5px;top:82.2px;width:169px;font-size:5.5px;line-height:7px;color:#e6e6e6;text-align:justify;text-align-last:left">Lorem ipsum dolor sit amet, consectetur adipiscing elit, sed do eiusmod tempor incididunt ut labore et dolore magna aliqua. Ut enim ad minim veniam, quis nostrud exercitation ullamco laboris nisi ut Lorem ipsum dolor sit amet, consectetur adipiscing elit, sed do eiusmod tempor incididunt ut labore et dolore magna aliqua. Ut enim ad minim veniam, quis nostrud exercitation ullamco laboris nisi ut</div>
</div>
<!-- paste options -->
<div class="a" style="left:383px;top:251px;width:39px;height:15px;background:#fffffb;border:1px solid #ece3a8"></div>
<svg class="a" style="left:384px;top:253px" width="12" height="11" viewBox="0 0 12 11"><rect x="0.5" y="1.5" width="7" height="8" rx="1" fill="#f0f0f0" stroke="#333" stroke-width="0.9"/><rect x="2" y="0.5" width="4" height="2" fill="#333"/><rect x="4.5" y="5" width="6.5" height="5.5" fill="#a9c2e3" stroke="#3b5f93" stroke-width="0.9"/></svg>
<div class="t" style="left:397px;top:253px;font-size:8px;line-height:10px;color:#333">(Ctrl)</div>
<svg class="a" style="left:416px;top:257px" width="4" height="2" viewBox="0 0 4 2"><path d="M0 0 H4 L2 2z" fill="#444"/></svg>

<!-- notes -->
<div class="a" style="left:82px;top:614px;width:664px;height:1px;background:#a0a4aa"></div>
<div class="a" style="left:82px;top:615px;width:664px;height:2px;background:#f4f5f7"></div>
<div class="a" style="left:81px;top:617px;width:665px;height:30px;background:#fff;border-top:1px solid #b9bdc3"></div>
<div class="t" style="left:88px;top:622.5px;font-size:10.3px;line-height:12px;color:#2e2e2e">Click to add notes</div>

<!-- notes scrollbar -->
<div class="a" style="left:734px;top:618px;width:11px;height:29px;background:linear-gradient(90deg,#dcdfe4,#e4e7eb)"></div>
<svg class="a" style="left:736px;top:622px" width="7" height="4" viewBox="0 0 7 4"><path d="M0 4 L3.5 0 L7 4z" fill="#80858d"/></svg>
<svg class="a" style="left:736px;top:639.5px" width="7" height="4" viewBox="0 0 7 4"><path d="M0 0 L3.5 4 L7 0z" fill="#80858d"/></svg>


<!-- status bar -->
<div class="a" style="left:0;top:647px;width:750px;height:20px;background:#eef0f5"></div>
<div class="a" style="left:0;top:647px;width:1px;height:20px;background:#8a8d94"></div>
<div class="a" style="left:749px;top:647px;width:1px;height:20px;background:#8a8d94"></div>
<div class="a" style="left:4px;top:647px;width:742px;height:16px;background:linear-gradient(#eceef1,#dadde1 60%,#d0d3d8);border-top:1px solid #a9aeb5"></div>
<div class="a" style="left:0;top:666px;width:750px;height:1px;background:#8a8d94"></div>
<div class="a" style="left:0;top:663px;width:4px;height:4px;background:linear-gradient(45deg,#2d8a96 40%,transparent 45%)"></div>
<div class="t" style="left:11px;top:650px;color:#474747">Slide 1 of 2</div>
<div class="t" style="left:60px;top:650px;color:#474747">"Office Theme"</div>

<div class="a" style="left:53px;top:649px;width:1px;height:13px;background:#c2c6cc"></div>
<div class="a" style="left:114px;top:649px;width:1px;height:13px;background:#c2c6cc"></div>
<div class="a" style="left:136px;top:649px;width:1px;height:13px;background:#c2c6cc"></div>
<svg class="a" style="left:119px;top:649px" width="13" height="12" viewBox="0 0 13 12"><path d="M1 7 L5 3 L10 7 L6 11z" fill="#fff" stroke="#6b7fa8" stroke-width="0.9"/><path d="M2 8 L6 11.5 L11 7.5" stroke="#3a5fa5" stroke-width="1" fill="none"/><path d="M7 1 L11 5 M11 1 L7 5" stroke="#e03b3b" stroke-width="1.6"/></svg>
<!-- view buttons -->
<div class="a" style="left:552px;top:648px;width:14px;height:13px;background:linear-gradient(#fdebb0,#f8d879);border:1px solid #d7b457"></div>
<svg class="a" style="left:555px;top:651px" width="8" height="7" viewBox="0 0 8 7"><rect x="0.5" y="0.5" width="7" height="6" fill="#fff" stroke="#4d5461"/><rect x="0.5" y="0.5" width="2.5" height="6" fill="#cfd5de" stroke="#4d5461"/></svg>
<svg class="a" style="left:568px;top:651px" width="8" height="8" viewBox="0 0 8 8"><g fill="none" stroke="#5a616b" stroke-width="0.9"><rect x="0.5" y="0.5" width="3" height="3"/><rect x="4.5" y="0.5" width="3" height="3"/><rect x="0.5" y="4.5" width="3" height="3"/><rect x="4.5" y="4.5" width="3" height="3"/></g></svg>
<svg class="a" style="left:578px;top:650px" width="9" height="9" viewBox="0 0 9 9"><g fill="none" stroke="#5a616b" stroke-width="0.9"><path d="M4.5 1.5 C3 0.5,1.5 0.5,0.5 1 V8 C1.5 7.5,3 7.5,4.5 8.5 C6 7.5,7.5 7.5,8.5 8 V1 C7.5 0.5,6 0.5,4.5 1.5 V8.5"/></g></svg>
<svg class="a" style="left:591px;top:650px" width="9" height="10" viewBox="0 0 9 10"><g fill="none" stroke="#5a616b" stroke-width="0.9"><rect x="0.5" y="0.5" width="8" height="5"/><path d="M4.5 5.5 V9 M2 9.5 H7 M2 8 L4.5 5.5 L7 8"/></g></svg>
<div class="t" style="left:607px;top:650px;color:#474747">37%</div>
<div class="a" style="left:630px;top:649px;width:11px;height:11px;border-radius:50%;background:linear-gradient(#fdfdfe,#e3e6ea);border:1px solid #8e959e"></div>
<div class="a" style="left:633px;top:654px;width:5px;height:1.2px;background:#3b4049"></div>
<div class="a" style="left:641px;top:654.5px;width:65px;height:1px;background:#a8adb4"></div>
<div class="a" style="left:672.5px;top:652.5px;width:1px;height:4px;background:#b9bec5"></div>
<svg class="a" style="left:649px;top:649px" width="7" height="11" viewBox="0 0 7 11"><path d="M0.5 0.5 H6.5 V7 L3.5 10.5 L0.5 7z" fill="#f5f6f8" stroke="#858c95" stroke-width="0.9"/></svg>
<div class="a" style="left:705px;top:649px;width:11px;height:11px;border-radius:50%;background:linear-gradient(#fdfdfe,#e3e6ea);border:1px solid #8e959e"></div>
<div class="a" style="left:708px;top:654px;width:5px;height:1.2px;background:#3b4049"></div>
<div class="a" style="left:709.9px;top:652px;width:1.2px;height:5px;background:#3b4049"></div>
<div class="a" style="left:720px;top:648px;width:13px;height:13px;background:linear-gradient(#f6f7f9,#dde1e6);border:1px solid #8e959e"></div>
<svg class="a" style="left:722px;top:650px" width="9" height="9" viewBox="0 0 9 9"><g fill="#3b4049"><path d="M0 0 H3 L0 3z M9 0 V3 L6 0z M0 9 V6 L3 9z M9 9 H6 L9 6z"/></g><rect x="3" y="3" width="3" height="3" fill="#fff" stroke="#8e959e" stroke-width="0.6"/></svg>
<svg class="a" style="left:738px;top:655px" width="7" height="7" viewBox="0 0 7 7"><g fill="#a9aeb5"><rect x="5" y="1" width="1.2" height="1.2"/><rect x="3" y="3" width="1.2" height="1.2"/><rect x="5" y="3" width="1.2" height="1.2"/><rect x="1" y="5" width="1.2" height="1.2"/><rect x="3" y="5" width="1.2" height="1.2"/><rect x="5" y="5" width="1.2" height="1.2"/></g></svg>
</div></body></html>
